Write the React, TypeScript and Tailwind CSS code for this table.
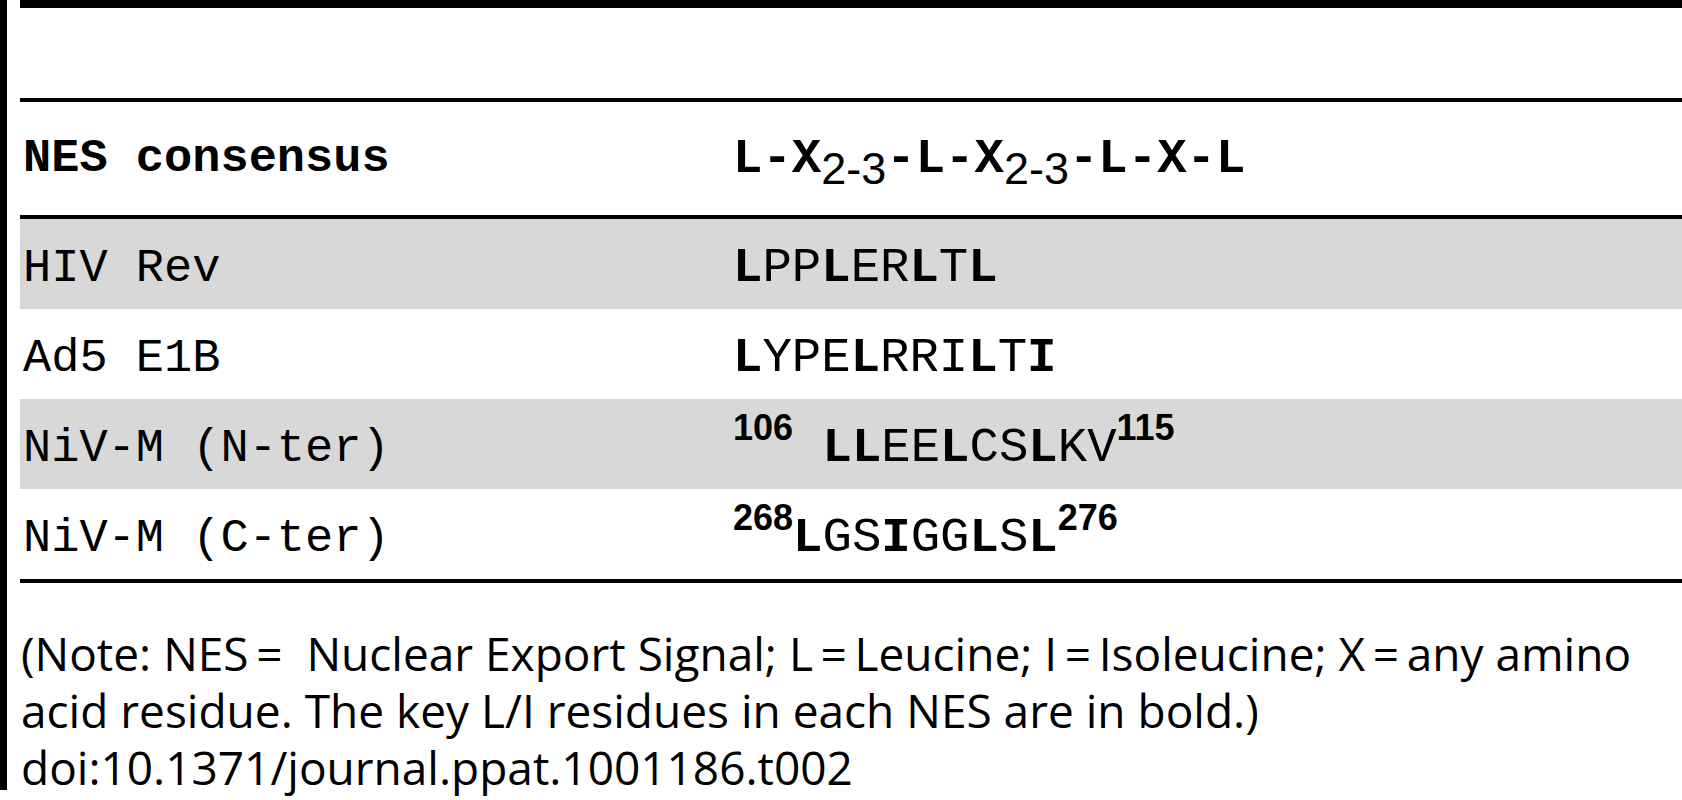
import React from "react";

const mono = "font-['Liberation_Mono','Courier_New',monospace]";
const sans = "font-['Liberation_Sans',Arial,sans-serif]";
const note = "font-['Open_Sans','Noto_Sans',sans-serif]";

// mask: "1" = bold residue, "0" = regular
function Seq({ text, mask }: { text: string; mask: string }) {
  const parts: { s: string; b: boolean }[] = [];
  for (let i = 0; i < text.length; i++) {
    const b = mask[i] === "1";
    const last = parts[parts.length - 1];
    if (last && last.b === b) last.s += text[i];
    else parts.push({ s: text[i], b });
  }
  return (
    <>
      {parts.map((p, i) => (
        <span key={i} className={p.b ? "font-bold" : "font-normal"}>
          {p.s}
        </span>
      ))}
    </>
  );
}

function Sup({ children }: { children: React.ReactNode }) {
  return <span className={`${sans} relative -top-[21px] text-[36px] font-bold`}>{children}</span>;
}

function Sub({ children }: { children: React.ReactNode }) {
  return <span className={`${sans} relative top-[12px] text-[45px] font-normal`}>{children}</span>;
}

function Row({ name, gray, children }: { name: string; gray?: boolean; children: React.ReactNode }) {
  return (
    <div className={`grid h-[90px] grid-cols-[710px_1fr] items-center pl-[3px] pt-[8px] ${gray ? "bg-[#d8d8d8]" : ""}`}>
      <div className="whitespace-nowrap text-[47px]">{name}</div>
      <div className="whitespace-nowrap text-[49px]">{children}</div>
    </div>
  );
}

export default function App() {
  return (
    <div className="flex h-[800px] w-[1682px] overflow-hidden bg-white text-black">
      <div className="h-[790px] w-[7px] shrink-0 bg-black" />
      <div className="ml-[13px] flex flex-1 flex-col">
        <div className="h-[8px] bg-black" />
        <div className="mt-[90px] h-[4px] bg-black" />

        <div className={`${mono} grid h-[113px] grid-cols-[710px_1fr] items-center pl-[3px] font-bold leading-none`}>
          <div className="whitespace-nowrap text-[47px]">NES consensus</div>
          <div className="whitespace-nowrap text-[49px]">
            L-X<Sub>2-3</Sub>-L-X<Sub>2-3</Sub>-L-X-L
          </div>
        </div>

        <div className="h-[4px] bg-black" />

        <div className={`${mono} leading-none`}>
          <Row name="HIV Rev" gray>
            <Seq text="LPPLERLTL" mask="100100101" />
          </Row>
          <Row name="Ad5 E1B">
            <Seq text="LYPELRRILTI" mask="10001000101" />
          </Row>
          <Row name="NiV-M (N-ter)" gray>
            <Sup>106</Sup> <Seq text="LLEELCSLKV" mask="1100100100" />
            <Sup>115</Sup>
          </Row>
          <Row name="NiV-M (C-ter)">
            <Sup>268</Sup>
            <Seq text="LGSIGGLSL" mask="100100101" />
            <Sup>276</Sup>
          </Row>
        </div>

        <div className="h-[4px] bg-black" />

        <div className={`${note} mt-[42px] pl-[1px] text-[46px] leading-[57px]`}>
          <div className="whitespace-nowrap">
            (Note: NES{"\u2009"}={"\u00a0"} Nuclear Export Signal; L{"\u2009"}={"\u2009"}Leucine; I{"\u2009"}={"\u2009"}Isoleucine; X{"\u2009"}={"\u2009"}any amino
          </div>
          <div className="whitespace-nowrap">acid residue. The key L/I residues in each NES are in bold.)</div>
          <div className="whitespace-nowrap">doi:10.1371/journal.ppat.1001186.t002</div>
        </div>
      </div>
    </div>
  );
}
